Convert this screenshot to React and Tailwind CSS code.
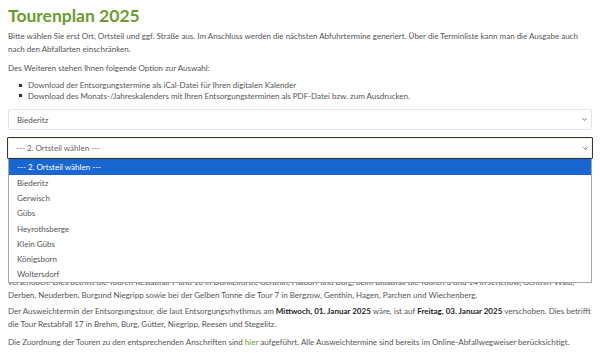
import { ChevronDown } from "lucide-react";

const ortsteile = [
  "Biederitz",
  "Gerwisch",
  "Gübs",
  "Heyrothsberge",
  "Klein Gübs",
  "Königsborn",
  "Woltersdorf",
];

const App = () => {
  return (
    <section
      className="bg-white min-h-screen px-2 pt-[6px] text-[8px] text-[#555]"
      style={{ fontFamily: "Lato, 'Open Sans', sans-serif" }}
    >
      <h1 className="text-[17.5px] leading-[20px] font-bold text-[#6a9c2d]">
        Tourenplan 2025
      </h1>

      <p className="mt-[4px] leading-[13px]">
        Bitte wählen Sie erst Ort, Ortsteil und ggf. Straße aus. Im Anschluss
        werden die nächsten Abfuhrtermine generiert. Über die Terminliste kann
        man die Ausgabe auch nach den Abfallarten einschränken.
      </p>

      <p className="mt-[6px] leading-[13px]">
        Des Weiteren stehen Ihnen folgende Option zur Auswahl:
      </p>

      <ul className="mt-[5px] pl-[11px] leading-[10.5px]">
        <li className="flex items-center gap-[6px]">
          <span className="w-[3px] h-[3px] bg-[#333] shrink-0"></span>
          Download der Entsorgungstermine als iCal-Datei für Ihren digitalen
          Kalender
        </li>
        <li className="flex items-center gap-[6px]">
          <span className="w-[3px] h-[3px] bg-[#333] shrink-0"></span>
          Download des Monats-/Jahreskalenders mit Ihren Entsorgungsterminen
          als PDF-Datei bzw. zum Ausdrucken.
        </li>
      </ul>

      {/* ORT */}
      <div className="mt-[8px] h-[21px] border border-[#e3e3e3] rounded-[2px] flex items-center justify-between pl-[8px] pr-[3px]">
        <span>Biederitz</span>
        <ChevronDown size={7} strokeWidth={3} className="text-[#555]" />
      </div>

      {/* ORTSTEIL (open) */}
      <div className="relative mt-[7px]">
        <div className="h-[22px] border border-[#333] rounded-[1px] ring-1 ring-inset ring-[#eef3dc] flex items-center justify-between pl-[8px] pr-[3px] -mx-px">
          <span className="text-[#666]">--- 2. Ortsteil wählen ---</span>
          <ChevronDown size={7} strokeWidth={3} className="text-[#555]" />
        </div>

        <div className="absolute top-full left-0 right-0 z-10 bg-white border border-[#a8a8a8] border-t-0">
          <div className="h-[16px] bg-[#1a66d0] text-white flex items-center pl-[8px]">
            --- 2. Ortsteil wählen ---
          </div>
          {ortsteile.map((name) => (
            <div key={name} className="h-[15.3px] flex items-center pl-[8px]">
              {name}
            </div>
          ))}
        </div>
      </div>

      {/* STRASSE */}
      <div className="mt-[7px] h-[21px] border border-[#e3e3e3] rounded-[2px] flex items-center justify-between pl-[8px] pr-[3px] text-[#999]">
        <span>--- 3. Straße wählen ---</span>
        <ChevronDown size={7} strokeWidth={3} className="text-[#999]" />
      </div>

      <div className="mt-[8px] flex">
        <button className="h-[22px] px-3 bg-[#6a9c2d] text-white rounded-[2px]">
          Termine anzeigen
        </button>
      </div>

      <h2 className="mt-[26px] text-[12px] leading-[16px] font-bold text-[#6a9c2d]">
        Hinweise zu Feiertagen
      </h2>

      <p className="mt-[4px] leading-[13px]">
        Der Ausweichtermin der Entsorgungstour, die laut Entsorgungsrhythmus am{" "}
        <b className="text-[#222]">Mittwoch, 25. Dezember 2024</b> wäre, ist auf{" "}
        <b className="text-[#222]">Freitag, 27. Dezember 2024</b>
        <br />
        verschoben. Dies betrifft die Touren Restabfall 7 und 10 in
        Dunkelforth, Genthin, Haldorf und Burg, beim Bioabfall die Touren 3 und
        14 in Jerichow, Genthin-Wald, Derben, Neuderben, Burgund Niegripp sowie
        bei der Gelben Tonne die Tour 7 in Bergzow, Genthin, Hagen, Parchen und
        Wiechenberg.
      </p>

      <p className="mt-[3px] leading-[13px]">
        Der Ausweichtermin der Entsorgungstour, die laut Entsorgungsrhythmus am{" "}
        <b className="text-[#222]">Mittwoch, 01. Januar 2025</b> wäre, ist auf{" "}
        <b className="text-[#222]">Freitag, 03. Januar 2025</b> verschoben.
        Dies betrifft die Tour Restabfall 17 in Brehm, Burg, Gütter, Niegripp,
        Reesen und Stegelitz.
      </p>

      <p className="mt-[5px] leading-[13px]">
        Die Zuordnung der Touren zu den entsprechenden Anschriften sind{" "}
        <a className="text-[#6a9c2d]">hier</a> aufgeführt. Alle
        Ausweichtermine sind bereits im Online-Abfallwegweiser berücksichtigt.
      </p>
    </section>
  );
};

export default App;
